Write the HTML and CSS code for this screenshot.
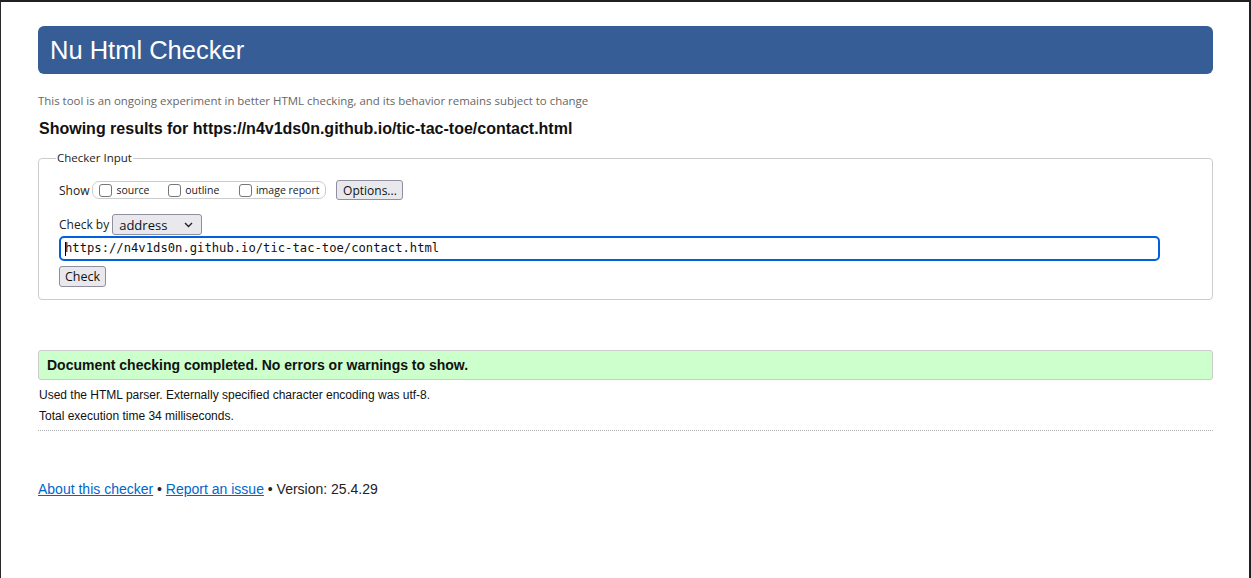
FILE: index.html
```html
<!DOCTYPE html>
<html lang="en">
<head>
<meta charset="utf-8">
<title>Nu Html Checker</title>
<link rel="stylesheet" href="styles.css">
</head>
<body>
<div class="frame">
  <h1 class="banner">Nu Html Checker</h1>
  <p class="tagline">This tool is an ongoing experiment in better HTML checking, and its behavior remains subject to change</p>
  <h2 class="results-title">Showing results for https://n4v1ds0n.github.io/tic-tac-toe/contact.html</h2>
  <fieldset class="checker">
    <legend class="legend">Checker Input</legend>
    <div class="row show-row">
      <span class="label">Show</span>
      <span class="show-group">
        <label class="opt"><span class="box"></span>source</label>
        <label class="opt"><span class="box"></span>outline</label>
        <label class="opt"><span class="box"></span>image report</label>
      </span>
      <span class="btn options">Options...</span>
    </div>
    <div class="row by-row">
      <span class="label">Check by</span>
      <span class="select">address<svg class="chev" width="9" height="6" viewBox="0 0 9 6"><path d="M1 1l3.5 3.5L8 1" fill="none" stroke="#222" stroke-width="1.4"/></svg></span>
    </div>
    <div class="url-input"><span class="caret"></span>https://n4v1ds0n.github.io/tic-tac-toe/contact.html</div>
    <div class="row"><span class="btn check">Check</span></div>
  </fieldset>
  <p class="success">Document checking completed. No errors or warnings to show.</p>
  <p class="details">Used the HTML parser. Externally specified character encoding was utf-8.</p>
  <p class="details">Total execution time 34 milliseconds.</p>
  <hr class="dotted">
  <p class="footer"><a href="#">About this checker</a> • <a href="#">Report an issue</a> • Version: 25.4.29</p>
</div>
</body>
</html>
```
FILE: styles.css
```css
html, body { margin: 0; padding: 0; background: #fff; }
body { font-family: "Liberation Sans", Arial, sans-serif; color: #111; }
.frame {
  box-sizing: border-box;
  height: 578px;
  border-top: 2px solid #1f1f24;
  border-left: 1px solid #2a2a2e;
  border-right: 2px solid #1f1f24;
  padding: 24px 36px 0 37px;
}
.banner {
  margin: 0;
  height: 48px;
  box-sizing: border-box;
  background: #365d95;
  border-radius: 6px;
  color: #fff;
  font-weight: normal;
  font-size: 25.5px;
  line-height: 48px;
  padding-left: 12px;
}
.tagline {
  margin: 19px 0 0 0;
  font-family: "Open Sans", "Noto Sans", sans-serif;
  font-size: 11.45px;
  color: #666;
  line-height: 16px;
}
.results-title {
  margin: 10px 0 0 1px;
  font-size: 16px;
  font-weight: bold;
  line-height: 20px;
  color: #111;
}
.checker {
  margin: 12px 0 0 0;
  border: 1px solid #ccc;
  border-radius: 4px;
  padding: 6px 20px 13px 20px;
  height: 149px;
  box-sizing: border-box;
}
.legend {
  font-family: "Open Sans", "Noto Sans", sans-serif;
  font-size: 11.5px;
  color: #222;
  padding: 0 1px;
  margin-left: -3px;
  line-height: 14px;
}
.row { display: flex; align-items: center; }
.label {
  font-family: "Open Sans", "Noto Sans", sans-serif;
  font-size: 12px;
  color: #222;
}
.show-row { margin-top: 8px; height: 22px; }
.show-group {
  display: inline-flex;
  align-items: center;
  margin-left: 3px;
  border: 1px solid #ccc;
  border-radius: 7px;
  height: 18px;
  box-sizing: border-box;
  padding: 0 6px 0 6px;
  width: 234px;
}
.opt {
  display: inline-flex;
  align-items: center;
  white-space: nowrap;
  font-family: "Open Sans", "Noto Sans", sans-serif;
  font-size: 10.5px;
  color: #222;
}
.opt:nth-child(1) { width: 69px; }
.opt:nth-child(2) { width: 71px; }
.box {
  width: 13px;
  height: 13px;
  box-sizing: border-box;
  border: 1px solid #767676;
  border-radius: 3px;
  margin-right: 4px;
  background: #fff;
}
.btn {
  display: inline-flex;
  align-items: center;
  justify-content: center;
  box-sizing: border-box;
  height: 20px;
  border: 1px solid #8f8f9d;
  border-radius: 3px;
  background: #e9e9ed;
  font-family: "Open Sans", "Noto Sans", sans-serif;
  font-size: 12px;
  color: #111;
  white-space: nowrap;
}
.options { margin-left: 10px; width: 67px; }
.by-row { margin-top: 13px; }
.select {
  display: inline-flex;
  align-items: center;
  justify-content: space-between;
  box-sizing: border-box;
  margin-left: 3px;
  width: 90px;
  height: 21px;
  border: 1px solid #8f8f9d;
  border-radius: 3px;
  background: #e9e9ed;
  font-family: "Open Sans", "Noto Sans", sans-serif;
  font-size: 13px;
  color: #111;
  padding: 0 8px 0 6px;
}
.chev { flex: none; }
.url-input {
  margin-top: 1px;
  box-sizing: border-box;
  width: 1101px;
  height: 25px;
  border: 2px solid #0060df;
  border-radius: 5px;
  font-family: "DejaVu Sans Mono", "Liberation Mono", monospace;
  font-size: 12.2px;
  line-height: 21px;
  padding-left: 4px;
  color: #111;
  display: flex;
  align-items: center;
  white-space: nowrap;
}
.caret {
  display: inline-block;
  width: 1px;
  height: 14px;
  background: #000;
  margin-right: -1px;
}
.check { margin-top: 5px; width: 47px; height: 21px; font-size: 12.5px; }
.success {
  margin: 50px 0 0 0;
  box-sizing: border-box;
  height: 30px;
  background: #ccffcc;
  border: 1px solid #ccc;
  border-radius: 3px;
  padding-left: 8px;
  font-weight: bold;
  font-size: 14px;
  line-height: 28px;
  color: #111;
}
.details {
  margin: 7px 0 0 1px;
  font-size: 12px;
  line-height: 16px;
  color: #111;
}
.details + .details { margin-top: 5px; }
.dotted {
  margin: 6px 0 0 0;
  border: 0;
  border-top: 1px dotted #aaa;
  height: 0;
}
.footer {
  margin: 49px 0 0 0;
  font-size: 14px;
  line-height: 18px;
  color: #222;
}
.footer a { color: #0066cc; }
```
